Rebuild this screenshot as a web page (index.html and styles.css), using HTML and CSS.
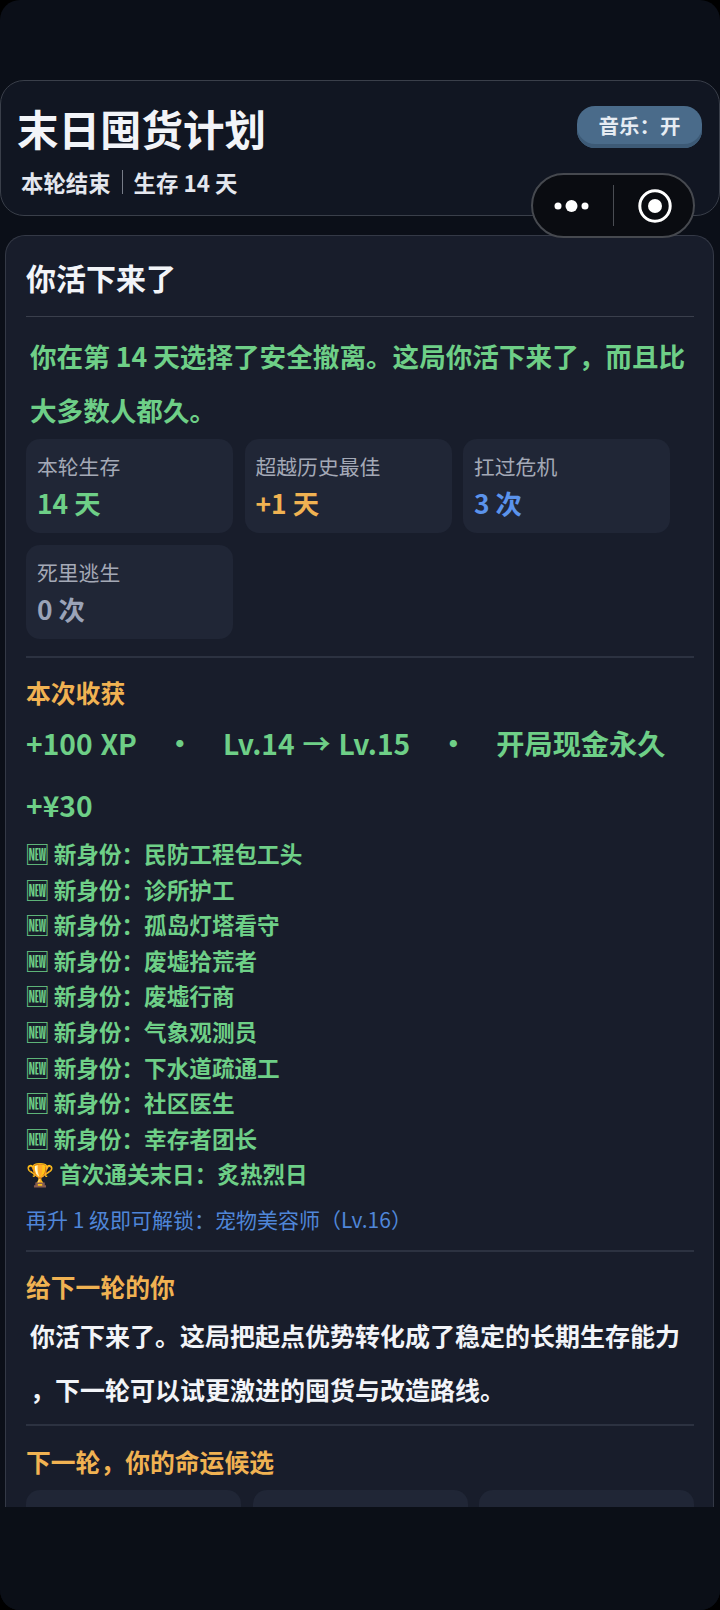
FILE: index.html
```html
<!DOCTYPE html>
<html lang="zh-CN">

<head>
    <meta charset="UTF-8" />
    <meta name="viewport" content="width=device-width, initial-scale=1.0" />
    <title>末日囤货计划</title>
    <link rel="stylesheet" href="styles.css">
</head>

<body>
    <div class="app">
        <div class="header">
            <div class="header-text">
                <h1>末日囤货计划</h1>
                <div class="header-sub"><span>本轮结束</span><span class="header-line"></span><span>生存 14 天</span></div>
            </div>
            <div class="music-btn">音乐：开</div>
        </div>

        <div class="capsule">
            <svg class="capsule-dots" width="35" height="16" viewBox="0 0 35 16">
                <circle cx="4" cy="8" r="3.5" fill="#fff" />
                <circle cx="17.5" cy="8" r="6" fill="#fff" />
                <circle cx="31" cy="8" r="3.5" fill="#fff" />
            </svg>
            <span class="capsule-line"></span>
            <svg class="capsule-target" width="34" height="34" viewBox="0 0 34 34">
                <circle cx="17" cy="17" r="15.2" fill="none" stroke="#fff" stroke-width="3" />
                <circle cx="17" cy="17" r="7" fill="#fff" />
            </svg>
        </div>

        <div class="result-card">
            <h2 class="result-title">你活下来了</h2>

            <div class="section">
                <p class="summary">你在第 14 天选择了安全撤离。这局你活下来了，而且比大多数人都久。</p>
                <div class="stats">
                    <div class="stat">
                        <div class="stat-label">本轮生存</div>
                        <div class="stat-value green">14 天</div>
                    </div>
                    <div class="stat">
                        <div class="stat-label">超越历史最佳</div>
                        <div class="stat-value orange">+1 天</div>
                    </div>
                    <div class="stat">
                        <div class="stat-label">扛过危机</div>
                        <div class="stat-value blue">3 次</div>
                    </div>
                    <div class="stat">
                        <div class="stat-label">死里逃生</div>
                        <div class="stat-value grey">0 次</div>
                    </div>
                </div>
            </div>

            <div class="section gains">
                <h3>本次收获</h3>
                <div class="rewards">
                    <span>+100 XP</span><span class="dot">·</span><span>Lv.14 → Lv.15</span><span class="dot">·</span><span>开局现金永久</span><span>+¥30</span>
                </div>
                <ul class="unlocks">
                    <li>🆕 新身份：民防工程包工头</li>
                    <li>🆕 新身份：诊所护工</li>
                    <li>🆕 新身份：孤岛灯塔看守</li>
                    <li>🆕 新身份：废墟拾荒者</li>
                    <li>🆕 新身份：废墟行商</li>
                    <li>🆕 新身份：气象观测员</li>
                    <li>🆕 新身份：下水道疏通工</li>
                    <li>🆕 新身份：社区医生</li>
                    <li>🆕 新身份：幸存者团长</li>
                    <li>🏆 首次通关末日：炙热烈日</li>
                </ul>
                <div class="next-unlock">再升 1 级即可解锁：宠物美容师（Lv.16）</div>
            </div>

            <div class="section advice">
                <h3>给下一轮的你</h3>
                <p>你活下来了。这局把起点优势转化成了稳定的长期生存能力<br>，下一轮可以试更激进的囤货与改造路线。</p>
            </div>

            <div class="section fates">
                <h3>下一轮，你的命运候选</h3>
                <div class="fate-grid">
                    <div class="fate"></div>
                    <div class="fate"></div>
                    <div class="fate"></div>
                </div>
            </div>
        </div>

        <div class="footer"></div>
    </div>
</body>

</html>
```

FILE: styles.css
```css
* {
    box-sizing: border-box;
    margin: 0;
    padding: 0;
}

html,
body {
    height: 100%;
    background-color: #000;
}

body {
    font-family: "Noto Sans CJK SC", "Noto Sans", sans-serif;
    color: #f2f4f8;
    overflow: hidden;
}

.app {
    position: relative;
    display: flex;
    flex-direction: column;
    height: 1610px;
    padding-top: 80px;
    overflow: hidden;
    border-radius: 20px;
    background-color: #0b0f18;
}

.header {
    display: flex;
    justify-content: space-between;
    align-items: flex-start;
    flex-shrink: 0;
    height: 136px;
    padding: 22px 17px 0 16px;
    background-color: #111622;
    border: 1px solid #3a3f4a;
    border-radius: 24px;
}

.header h1 {
    font-size: 41.5px;
    line-height: 50px;
    font-weight: 700;
}

.header-sub {
    display: flex;
    align-items: center;
    margin-top: 14px;
    margin-left: 4px;
    font-size: 22.4px;
    line-height: 30px;
    font-weight: 700;
    color: #e4e7ee;
}

.header-line {
    width: 1px;
    height: 24px;
    margin: 0 11px;
    background-color: #777c88;
}

.music-btn {
    width: 125px;
    height: 42px;
    margin-top: 3px;
    text-align: center;
    font-size: 20.5px;
    line-height: 38px;
    font-weight: 700;
    color: #e6ecf3;
    background-color: #4a6b8a;
    border-radius: 18px;
    box-shadow: inset 0 -4px 0 #3d5a76;
}

.capsule {
    position: absolute;
    top: 173px;
    left: 531px;
    display: flex;
    align-items: center;
    width: 164px;
    height: 65px;
    background-color: #0a0c11;
    border: 2px solid #46494f;
    border-radius: 33px;
}

.capsule-dots {
    margin-left: 21px;
}

.capsule-line {
    width: 1px;
    height: 41px;
    margin-left: 24px;
    background-color: #4a4d53;
}

.capsule-target {
    margin-left: 24px;
}

.result-card {
    flex: 1;
    min-height: 0;
    margin: 19px 6px 0 5px;
    padding: 0 19px 0 20px;
    overflow: hidden;
    background-color: #181d2b;
    border: 1px solid #343946;
    border-bottom: none;
    border-radius: 20px 20px 0 0;
}

.result-title {
    height: 80px;
    padding-top: 21px;
    font-size: 30px;
    line-height: 40px;
    font-weight: 700;
}

.section {
    border-top: 2px solid #2c3241;
}

.section:first-of-type {
    border-top: 1px solid #3a3f4c;
}

.section h3 {
    font-size: 24.8px;
    line-height: 34px;
    font-weight: 700;
    color: #f0b252;
}

.summary {
    padding: 12px 0 0 4px;
    font-size: 26.6px;
    line-height: 54px;
    font-weight: 700;
    color: #6ecf87;
}

.stats {
    display: grid;
    grid-template-columns: repeat(3, 207px);
    gap: 12px 11.5px;
    margin-top: 2px;
    margin-bottom: 17px;
}

.stat {
    height: 94px;
    padding: 12px 11px;
    background-color: #202636;
    border-radius: 14px;
}

.stat-label {
    font-size: 20.8px;
    line-height: 30px;
    color: #a4a9b6;
}

.stat-value {
    margin-top: 4px;
    font-size: 26.4px;
    line-height: 36px;
    font-weight: 700;
}

.green {
    color: #6ecf87;
}

.orange {
    color: #f0b252;
}

.blue {
    color: #5b93ec;
}

.grey {
    color: #9aa3b8;
}

.gains {
    padding-top: 17px;
}

.rewards {
    display: flex;
    flex-wrap: wrap;
    margin-top: 3px;
    font-size: 28.2px;
    line-height: 62px;
    font-weight: 600;
    word-spacing: 1.5px;
    color: #6ecf87;
}

.dot {
    width: 86px;
    text-align: center;
}

.rewards span:last-child {
    width: 100%;
}

.unlocks {
    list-style: none;
    font-size: 22.6px;
    line-height: 35.6px;
    font-weight: 700;
    color: #6ecf87;
}

.next-unlock {
    margin-top: 12px;
    font-size: 21px;
    line-height: 30px;
    color: #4f86d8;
}

.advice {
    margin-top: 16px;
    padding-top: 17px;
}

.advice p {
    padding: 5px 0 8px 4px;
    font-size: 25px;
    line-height: 54px;
    font-weight: 700;
    color: #f2f4f8;
}

.fates {
    padding-top: 18px;
}

.fate-grid {
    display: grid;
    grid-template-columns: repeat(3, 1fr);
    gap: 11.5px;
    margin-top: 12px;
}

.fate {
    height: 90px;
    background-color: #202636;
    border-radius: 14px;
}

.footer {
    flex-shrink: 0;
    height: 103px;
    background-color: #0b0f17;
}
```
